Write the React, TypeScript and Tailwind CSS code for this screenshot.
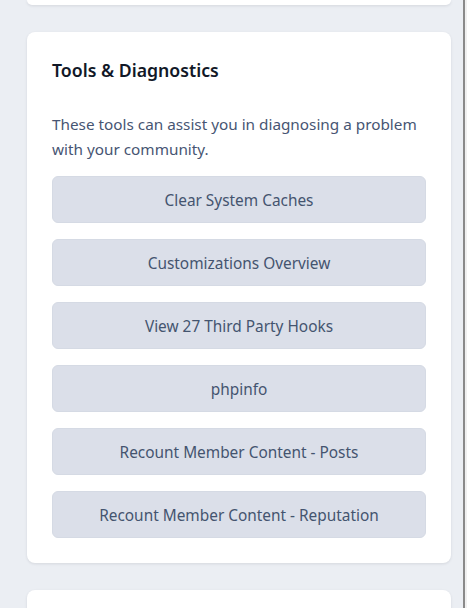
import React from 'react'

const TOOLS = [
    'Clear System Caches',
    'Customizations Overview',
    'View 27 Third Party Hooks',
    'phpinfo',
    'Recount Member Content - Posts',
    'Recount Member Content - Reputation',
]

export default function App() {
    return (
        <div
            className="flex h-[608px] w-[467px] overflow-hidden bg-[#ebeef3]"
            style={{ fontFamily: '"Noto Sans", "Open Sans", sans-serif' }}
        >
            <div className="flex w-[463px] flex-col gap-[27px] px-[27px] pr-[12px]">
                {/* previous card (tail) */}
                <div className="h-[5px] shrink-0 rounded-b-lg bg-white shadow-[0_1px_3px_rgba(15,23,42,0.1)]" />

                {/* Tools & Diagnostics */}
                <div className="shrink-0 rounded-lg bg-white px-[25px] pt-6 pb-[25px] shadow-[0_1px_3px_rgba(15,23,42,0.1)]">
                    <h2 className="text-[17.7px] leading-7 font-semibold text-[#111827]">Tools &amp; Diagnostics</h2>
                    <p className="mt-7 text-[15.3px] leading-[25px] text-[#475573]">
                        These tools can assist you in diagnosing a problem with your community.
                    </p>
                    <div className="mt-[14px] flex flex-col gap-4">
                        {TOOLS.map((t) => (
                            <button
                                key={t}
                                className="h-[47px] w-full rounded-md border border-[#d5dae4] bg-[#dbdfe9] pt-[3px] text-[15.4px] text-[#44546f]"
                            >
                                {t}
                            </button>
                        ))}
                    </div>
                </div>

                {/* next card (head) */}
                <div className="h-[40px] shrink-0 rounded-t-lg bg-white shadow-[0_1px_3px_rgba(15,23,42,0.1)]" />
            </div>
            <div className="w-[2px] bg-[#8a8a8a]" />
            <div className="w-[2px] bg-[#f0f0f0]" />
        </div>
    )
}
